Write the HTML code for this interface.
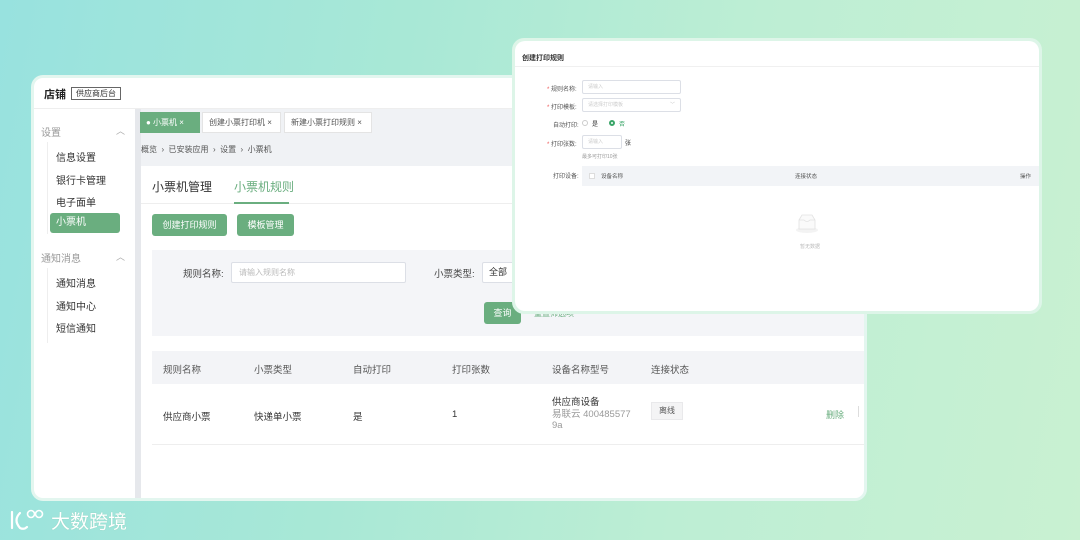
<!DOCTYPE html>
<html><head><meta charset="utf-8"><style>
*{margin:0;padding:0;box-sizing:border-box}
body{width:1080px;height:540px;overflow:hidden;position:relative;font-family:"Liberation Sans","Noto Sans CJK SC",sans-serif;background:linear-gradient(100deg,#98e2df 0%,#a8e8d6 35%,#bdeed4 65%,#c9f1d2 100%);color:#333}
.a{position:absolute;white-space:nowrap}
.win{position:absolute;left:31px;top:75px;width:836px;height:426px;border-radius:12px;background:#e3f6ef;padding:3px}
.inner{position:absolute;left:3px;top:3px;right:3px;bottom:3px;border-radius:9px;background:#fff;overflow:hidden}
.g{color:#6aae7f}
.btn{position:absolute;background:#6aae7f;color:#fff;font-size:9px;border-radius:3px;text-align:center}
.modal{position:absolute;left:512px;top:38px;width:530px;height:276px;border-radius:12px;background:#ddf5e8;}
.mi{position:absolute;left:3px;top:3px;right:3px;bottom:3px;border-radius:10px;background:#fff;overflow:hidden}
.inp{position:absolute;border:1px solid #dcdfe6;border-radius:2px;background:#fff}
</style></head><body>
<div class="win"><div class="inner">
 <div class="a" style="left:10px;top:8px;font-size:11px;font-weight:bold;color:#222">店铺</div>
 <div class="a" style="left:37px;top:9px;width:50px;height:13px;border:1px solid #666;font-size:8px;line-height:11px;text-align:center;color:#333">供应商后台</div>
 <div class="a" style="left:0;top:30px;width:830px;height:1px;background:#eee"></div>
 <div class="a" style="left:7px;top:46px;font-size:10px;color:#999">设置</div>
 <div class="a" style="left:82px;top:46px;font-size:9px;color:#aaa">︿</div>
 <div class="a" style="left:13px;top:64px;width:1px;height:92px;background:#eee"></div>
 <div class="a" style="left:22px;top:71px;font-size:10px">信息设置</div>
 <div class="a" style="left:22px;top:94px;font-size:10px">银行卡管理</div>
 <div class="a" style="left:22px;top:116px;font-size:10px">电子面单</div>
 <div class="a" style="left:16px;top:135px;width:70px;height:20px;background:#6aae7f;border-radius:3px;color:#fff;font-size:10px;line-height:20px;padding-left:6px">小票机</div>
 <div class="a" style="left:7px;top:172px;font-size:10px;color:#999">通知消息</div>
 <div class="a" style="left:82px;top:172px;font-size:9px;color:#aaa">︿</div>
 <div class="a" style="left:13px;top:190px;width:1px;height:75px;background:#eee"></div>
 <div class="a" style="left:22px;top:197px;font-size:10px">通知消息</div>
 <div class="a" style="left:22px;top:220px;font-size:10px">通知中心</div>
 <div class="a" style="left:22px;top:242px;font-size:10px">短信通知</div>
 <div class="a" style="left:101px;top:31px;width:730px;height:392px;background:#f0f2f5"></div>
 <div class="a" style="left:101px;top:31px;width:6px;height:392px;background:#e6e8ec"></div>
 <div class="a" style="left:106px;top:34px;width:60px;height:21px;background:#6aae7f;color:#fff;font-size:8px;line-height:21px;padding-left:6px">● 小票机 ×</div>
 <div class="a" style="left:168px;top:34px;width:79px;height:21px;background:#fff;border:1px solid #e4e4e4;font-size:8px;line-height:19px;padding-left:6px;color:#555">创建小票打印机 ×</div>
 <div class="a" style="left:250px;top:34px;width:88px;height:21px;background:#fff;border:1px solid #e4e4e4;font-size:8px;line-height:19px;padding-left:6px;color:#555">新建小票打印规则 ×</div>
 <div class="a" style="left:107px;top:66px;font-size:8px;color:#555">概览 &nbsp;›&nbsp; 已安装应用 &nbsp;›&nbsp; 设置 &nbsp;›&nbsp; 小票机</div>
 <div class="a" style="left:107px;top:88px;width:724px;height:335px;background:#fff"></div>
 <div class="a" style="left:118px;top:100px;font-size:12px;color:#333">小票机管理</div>
 <div class="a g" style="left:200px;top:100px;font-size:12px">小票机规则</div>
 <div class="a" style="left:107px;top:125px;width:724px;height:1px;background:#eee"></div>
 <div class="a" style="left:200px;top:124px;width:55px;height:2px;background:#6aae7f"></div>
 <div class="btn" style="left:118px;top:136px;width:75px;height:22px;line-height:22px">创建打印规则</div>
 <div class="btn" style="left:203px;top:136px;width:57px;height:22px;line-height:22px">模板管理</div>
 <div class="a" style="left:118px;top:172px;width:713px;height:86px;background:#f4f5f8"></div>
 <div class="a" style="left:149px;top:188px;font-size:9.5px;color:#444">规则名称:</div>
 <div class="inp" style="left:197px;top:184px;width:175px;height:21px;font-size:8px;color:#bbb;line-height:19px;padding-left:7px">请输入规则名称</div>
 <div class="a" style="left:400px;top:188px;font-size:9.5px;color:#444">小票类型:</div>
 <div class="inp" style="left:448px;top:184px;width:60px;height:21px;font-size:9px;line-height:19px;padding-left:6px">全部</div>
 <div class="btn" style="left:450px;top:224px;width:37px;height:22px;line-height:22px">查询</div>
 <div class="a g" style="left:500px;top:230px;font-size:8px">重置筛选项</div>
 <div class="a" style="left:118px;top:273px;width:713px;height:33px;background:#f3f4f7"></div>
 <div class="a" style="left:129px;top:284px;font-size:9.5px;color:#555">规则名称</div>
 <div class="a" style="left:220px;top:284px;font-size:9.5px;color:#555">小票类型</div>
 <div class="a" style="left:319px;top:284px;font-size:9.5px;color:#555">自动打印</div>
 <div class="a" style="left:418px;top:284px;font-size:9.5px;color:#555">打印张数</div>
 <div class="a" style="left:518px;top:284px;font-size:9.5px;color:#555">设备名称型号</div>
 <div class="a" style="left:617px;top:284px;font-size:9.5px;color:#555">连接状态</div>
 <div class="a" style="left:129px;top:331px;font-size:9.5px">供应商小票</div>
 <div class="a" style="left:220px;top:331px;font-size:9.5px">快递单小票</div>
 <div class="a" style="left:319px;top:331px;font-size:9.5px">是</div>
 <div class="a" style="left:418px;top:331px;font-size:9.5px">1</div>
 <div class="a" style="left:518px;top:316px;font-size:9.5px">供应商设备</div>
 <div class="a" style="left:518px;top:331px;font-size:9.5px;color:#999;line-height:11px;white-space:normal;width:90px">易联云 400485577<br>9a</div>
 <div class="a" style="left:617px;top:324px;width:32px;height:18px;background:#f4f4f5;border:1px solid #e9e9eb;font-size:8px;line-height:16px;text-align:center;color:#555">离线</div>
 <div class="a g" style="left:792px;top:330px;font-size:9px">删除</div>
 <div class="a" style="left:824px;top:328px;width:1px;height:11px;background:#ddd"></div>
 <div class="a" style="left:118px;top:366px;width:713px;height:1px;background:#eee"></div>
</div></div>

<div class="modal"><div class="mi">
 <div class="a" style="left:7px;top:12px;font-size:7px;font-weight:bold;color:#333">创建打印规则</div>
 <div class="a" style="left:0;top:25px;width:524px;height:1px;background:#f0f0f0"></div>
 <div class="a" style="left:32px;top:43px;font-size:6px;color:#555"><span style="color:#e55">*</span> 规则名称:</div>
 <div class="inp" style="left:67px;top:39px;width:99px;height:14px;font-size:5px;color:#ccc;line-height:12px;padding-left:5px">请输入</div>
 <div class="a" style="left:32px;top:61px;font-size:6px;color:#555"><span style="color:#e55">*</span> 打印模板:</div>
 <div class="inp" style="left:67px;top:57px;width:99px;height:14px;font-size:5px;color:#ccc;line-height:12px;padding-left:5px">请选择打印模板<span style="position:absolute;right:5px;color:#bbb">﹀</span></div>
 <div class="a" style="left:38px;top:79px;font-size:6px;color:#555">自动打印:</div>
 <div class="a" style="left:67px;top:79px;width:6px;height:6px;border:1px solid #ccc;border-radius:50%"></div>
 <div class="a" style="left:77px;top:78px;font-size:6px">是</div>
 <div class="a" style="left:94px;top:79px;width:6px;height:6px;border:2px solid #3aa568;border-radius:50%"></div>
 <div class="a" style="left:104px;top:78px;font-size:6px;color:#3aa568">否</div>
 <div class="a" style="left:32px;top:98px;font-size:6px;color:#555"><span style="color:#e55">*</span> 打印张数:</div>
 <div class="inp" style="left:67px;top:94px;width:40px;height:14px;font-size:5px;color:#ccc;line-height:12px;padding-left:5px">请输入</div>
 <div class="a" style="left:110px;top:97px;font-size:6px">张</div>
 <div class="a" style="left:67px;top:112px;font-size:5px;color:#999">最多可打印10张</div>
 <div class="a" style="left:38px;top:130px;font-size:6px;color:#555">打印设备:</div>
 <div class="a" style="left:67px;top:125px;width:460px;height:20px;background:#f2f4f7"></div>
 <div class="a" style="left:74px;top:132px;width:6px;height:6px;border:1px solid #ddd;background:#fff"></div>
 <div class="a" style="left:86px;top:131px;font-size:5.5px;color:#555">设备名称</div>
 <div class="a" style="left:280px;top:131px;font-size:5.5px;color:#555">连接状态</div>
 <div class="a" style="left:505px;top:131px;font-size:5.5px;color:#555">操作</div>
 <svg class="a" style="left:280px;top:173px" width="24" height="20" viewBox="0 0 24 20"><ellipse cx="12" cy="16" rx="11" ry="3" fill="#f3f3f3"/><path d="M4 6 L7 1 H17 L20 6 V15 H4 Z" fill="#fafafa" stroke="#e2e2e2" stroke-width="0.8"/><path d="M4 6 H9 Q12 9 15 6 H20" fill="none" stroke="#e2e2e2" stroke-width="0.8"/></svg>
 <div class="a" style="left:285px;top:202px;font-size:5px;color:#bbb">暂无数据</div>
</div></div>

<svg class="a" style="left:8px;top:508px" width="42" height="24" viewBox="0 0 42 24"><path d="M4 4 V20 M12 5 Q5 12 12 20 Q16 22 19 19" fill="none" stroke="#fff" stroke-width="2.2" stroke-linecap="round"/><circle cx="23" cy="6" r="3.5" fill="none" stroke="#fff" stroke-width="1.6"/><circle cx="31" cy="6" r="3.5" fill="none" stroke="#fff" stroke-width="1.6"/></svg>
<div class="a" style="left:51px;top:507px;font-size:19px;color:#fff;letter-spacing:0px;text-shadow:0 0 1px #8cc9b0">大数跨境</div>
</body></html>
